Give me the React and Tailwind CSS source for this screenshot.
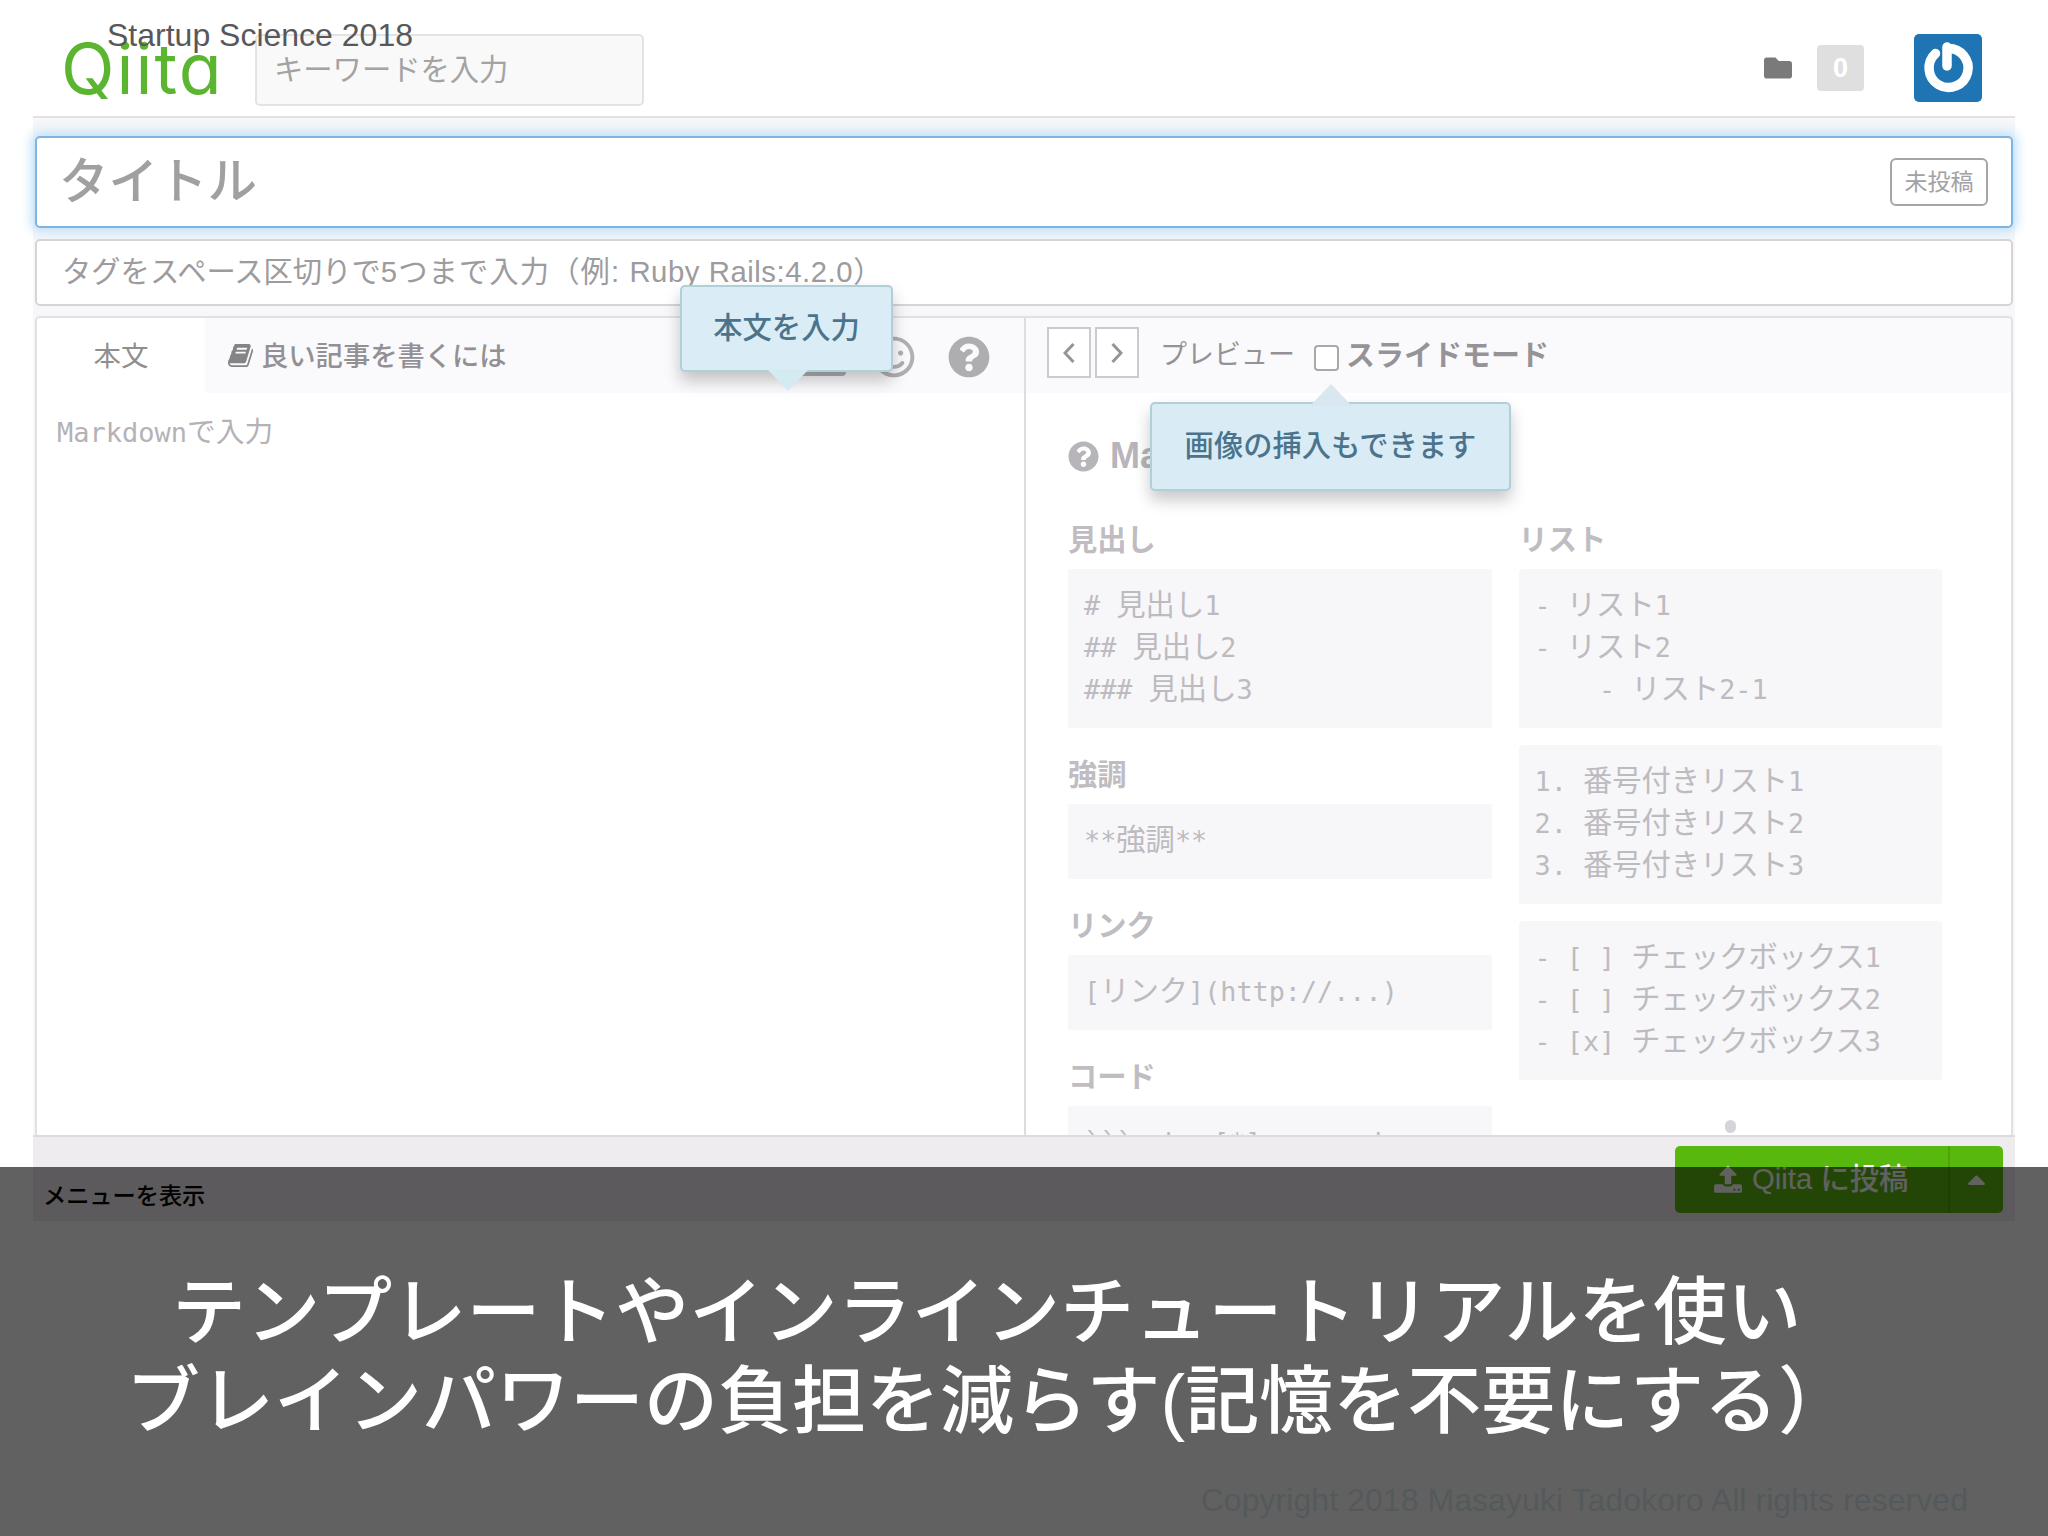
import React from 'react';
import { FaFolder, FaQuestionCircle, FaCaretUp, FaRegSmile } from 'react-icons/fa';

const cheatLeft = [
  { title: '見出し', lines: ['# 見出し1', '## 見出し2', '### 見出し3'] },
  { title: '強調', lines: ['**強調**'] },
  { title: 'リンク', lines: ['[リンク](http://...)'] },
  { title: 'コード', lines: ['```ruby [*]:name.rb'] },
];

const cheatRight = [
  ['- リスト1', '- リスト2', '    - リスト2-1'],
  ['1. 番号付きリスト1', '2. 番号付きリスト2', '3. 番号付きリスト3'],
  ['- [ ] チェックボックス1', '- [ ] チェックボックス2', '- [x] チェックボックス3'],
];

const BookIcon = ({ className }) => (
  <svg viewBox="0 0 1792 1792" fill="currentColor" className={className}>
    <path d="M1639 478q40 57 18 129l-275 906q-19 64-76.500 107.500t-122.500 43.500h-923q-77 0-148.500-53.500t-99.500-131.500q-24-67-2-127 0-4 3-27t4-37q1-8-3-21.500t-3-19.500q2-11 8-21t16.500-23.500 16.500-23.500q23-38 45-91.500t30-91.500q3-10 .5-30t-.5-28q3-11 17-28t17-23q21-36 42-92t25-90q1-9-2.500-32t.5-28q4-13 22-30.500t22-22.500q19-26 42.500-84.500t27.500-96.500q1-8-3-25.500t-2-26.500q2-8 9-18t18-23 17-21q8-12 16.500-30.500t15-35 16-36 19.500-32 26.500-23.500 36-11.500 47.500 5.500l-1 3q38-9 51-9h761q74 0 114 56t18 130l-274 906q-36 119-71.500 153.500t-128.500 34.500h-869q-27 0-38 15-11 16-1 43 24 70 144 70h923q29 0 56-15.500t35-41.500l300-987q7-22 5-57 38 15 59 43zm-1064 2q-4 13 2 22.500t20 9.500h608q13 0 25.500-9.500t16.500-22.500l21-64q4-13-2-22.500t-20-9.500h-608q-13 0-25.500 9.500t-16.500 22.500zm-83 256q-4 13 2 22.500t20 9.500h608q13 0 25.500-9.500t16.500-22.500l21-64q4-13-2-22.500t-20-9.500h-608q-13 0-25.500 9.500t-16.500 22.500z" />
  </svg>
);

const UploadIcon = ({ className }) => (
  <svg viewBox="0 0 1792 1792" fill="currentColor" className={className}>
    <path d="M1344 1472q0-26-19-45t-45-19-45 19-19 45 19 45 45 19 45-19 19-45zm256 0q0-26-19-45t-45-19-45 19-19 45 19 45 45 19 45-19 19-45zm128-224v320q0 40-28 68t-68 28h-1472q-40 0-68-28t-28-68v-320q0-40 28-68t68-28h427q21 56 70.500 92t110.500 36h256q61 0 110.500-36t70.500-92h427q40 0 68 28t28 68zm-325-648q-17 40-59 40h-256v448q0 26-19 45t-45 19h-256q-26 0-45-19t-19-45v-448h-256q-42 0-59-40-17-39 14-69l448-448q18-19 45-19t45 19l448 448q31 30 14 69z" />
  </svg>
);

const Avatar = () => (
  <svg viewBox="0 0 68 68" className="ml-[50px] h-[68px] w-[68px] rounded-[5px] bg-[#1f74b4]">
    <path d="M21.500 19.500A19.500 19.500 0 1 0 33.500 14.500" fill="none" stroke="#fff" strokeWidth="9.500" strokeLinecap="round" />
    <path d="M33 13v19" stroke="#fff" strokeWidth="9.500" strokeLinecap="round" />
  </svg>
);

// Latin runs are set in the monospace face, slightly smaller than the kana
const CodeLine = ({ text }) => (
  <div className="h-[42px] whitespace-pre leading-[42px]">
    {text.split(/([\x20-\x7e]+)/).filter(Boolean).map((part, i) =>
      /^[\x20-\x7e]/.test(part) ? (
        <span key={i} className="text-[26.800px]">{part}</span>
      ) : (
        <span key={i}>{part}</span>
      )
    )}
  </div>
);

const CodeBlock = ({ lines }) => (
  <div className="rounded-[3px] bg-[#f7f6f9] px-[16px] pt-[15px] pb-[18px] font-['DejaVu_Sans_Mono','Noto_Sans_CJK_JP',monospace] text-[29.300px] text-[#bdbbbf]">
    {lines.map((line) => (
      <CodeLine key={line} text={line} />
    ))}
  </div>
);

const CheatTitle = ({ children }) => (
  <h4 className="mb-[12px] h-[40px] text-[29.300px] leading-[40px] font-bold text-[#bfbdc1]">{children}</h4>
);

const Header = () => (
  <header className="flex h-[118px] items-start border-b-2 border-[#e3e1e2]">
    <div className="mt-[29px] ml-[28px] w-[194px] font-['Inter',sans-serif] text-[70px] leading-[80px] tracking-[2px] text-[#5cb531] [font-feature-settings:'cv11']">
      Qiita
    </div>
    <div className="mt-[34px] h-[72px] w-[389px] rounded-[5px] border-2 border-[#e4e3e4] bg-[#f9f9f9] pl-[17px] text-[29.300px] leading-[62px] text-[#a3a3a3]">
      キーワードを入力
    </div>
    <div className="mt-[34px] mr-[33px] ml-auto flex h-[68px] items-center">
      <FaFolder className="h-[28px] w-[28px] text-[#7a7a7a]" />
      <span className="ml-[25px] h-[46px] w-[47px] rounded-[4px] bg-[#dfdfdf] text-center font-['Liberation_Sans',sans-serif] text-[27px] leading-[46px] font-bold text-white">
        0
      </span>
      <Avatar />
    </div>
  </header>
);

const EditorPane = () => (
  <section className="w-[989px] border-r-2 border-[#dedce0]">
    <div className="flex h-[75px] items-center bg-[#faf9fb]">
      <div className="flex h-full w-[168px] items-center justify-center bg-white pb-[2px] text-[27.500px] text-[#8f8f8f]">本文</div>
      <BookIcon className="ml-[23px] h-[27px] w-[27px] text-[#858387]" />
      <span className="ml-[6px] pb-[2px] text-[27.300px] font-medium text-[#929094]">良い記事を書くには</span>
      <div className="mt-[2px] mr-[34px] ml-auto flex items-center text-[#b1afb2]">
        <div className="mr-[27px] h-[38px] w-[46px] rounded-[4px] border-4 border-current" />
        <FaRegSmile className="h-[42px] w-[42px]" />
        <FaQuestionCircle className="ml-[33px] h-[42px] w-[42px] text-[#aeadb0]" />
      </div>
    </div>
    <div className="flex items-baseline pt-[18px] pl-[20px] font-['DejaVu_Sans_Mono','Noto_Sans_CJK_JP',monospace] leading-[42px] text-[#b4b2b5]">
      <span className="text-[27px]">Markdown</span>
      <span className="text-[28.700px]">で入力</span>
    </div>
  </section>
);

const PreviewPane = () => (
  <section className="flex-1 overflow-hidden">
    <div className="flex h-[75px] items-start bg-[#fafafc] pt-[9px] pl-[21px]">
      <div className="flex h-[51px] w-[44px] items-center justify-center border-2 border-[#cccace] bg-white text-[#969498]">
        <svg viewBox="0 0 12 20" className="h-[20px] w-[12px]" fill="none" stroke="currentColor" strokeWidth="3"><path d="M10.500 1L2 10l8.500 9" /></svg>
      </div>
      <div className="ml-[4px] flex h-[51px] w-[44px] items-center justify-center border-2 border-[#cccace] bg-white text-[#969498]">
        <svg viewBox="0 0 12 20" className="h-[20px] w-[12px]" fill="none" stroke="currentColor" strokeWidth="3"><path d="M1.500 1L10 10l-8.500 9" /></svg>
      </div>
      <span className="ml-[21px] w-[154px] text-[27px] leading-[51px] text-[#949296]">プレビュー</span>
      <span className="mt-[18px] h-[26px] w-[25px] rounded-[4px] border-2 border-[#aaa8ac] bg-white" />
      <span className="ml-[7px] text-[29px] leading-[53px] font-bold text-[#959397]">スライドモード</span>
    </div>
    <div className="pt-[35px] pr-[69px] pl-[42px]">
      <h3 className="flex h-[56px] items-center whitespace-nowrap text-[36px] font-bold text-[#b7b5b9]">
        <FaQuestionCircle className="mr-[11px] h-[31px] w-[31px]" />
        <span className="font-['Liberation_Sans','Noto_Sans_CJK_JP',sans-serif]">Markdown チートシート</span>
      </h3>
      <div className="mt-[33px] grid grid-cols-2 gap-x-[27px]">
        <div className="flex flex-col gap-[24px]">
          {cheatLeft.map((item) => (
            <div key={item.title}>
              <CheatTitle>{item.title}</CheatTitle>
              <CodeBlock lines={item.lines} />
            </div>
          ))}
        </div>
        <div>
          <CheatTitle>リスト</CheatTitle>
          <div className="flex flex-col gap-[17px]">
            {cheatRight.map((lines) => (
              <CodeBlock key={lines[0]} lines={lines} />
            ))}
          </div>
          <div className="mx-auto mt-[40px] h-[13px] w-[11px] rounded-full bg-[#d6d4d8]" />
        </div>
      </div>
    </div>
  </section>
);

const Footer = () => (
  <footer className="flex h-[86px] items-start border-t-2 border-[#dddbdd] bg-[#eeecee]">
    <span className="mt-[39px] ml-[10px] text-[23.200px] leading-[36px] font-medium text-black">メニューを表示</span>
    <div className="mt-[9px] mr-[12px] ml-auto flex h-[67px] w-[328px] rounded-[5px] bg-[#59b80d] text-white">
      <div className="flex w-[275px] items-center border-r-2 border-[#4fa30b] pl-[38px]">
        <UploadIcon className="h-[30px] w-[30px]" />
        <span className="ml-[9px] pb-[1px] whitespace-nowrap font-['Liberation_Sans','Noto_Sans_CJK_JP',sans-serif] text-[29.300px] font-medium">Qiita に投稿</span>
      </div>
      <div className="flex flex-1 items-center justify-center">
        <FaCaretUp className="h-[29px] w-[29px]" />
      </div>
    </div>
  </footer>
);

const App = () => {
  return (
    <div className="relative h-[1536px] w-[2048px] overflow-hidden bg-white font-['Noto_Sans_CJK_JP',sans-serif]">
      <main className="ml-[33px] w-[1982px]">
        <Header />
        <div className="bg-[#f7f6f9] px-[2px] pt-[18px]">
          <div className="flex h-[92px] items-center rounded-[5px] border-2 border-[#7fb4e0] bg-white pr-[23px] pl-[22px] shadow-[0_0_12px_4px_#bfe1fa]">
            <span className="pb-[8px] text-[49.500px] font-medium text-[#a0a0a0]">タイトル</span>
            <span className="ml-auto h-[48px] w-[98px] rounded-[6px] border-2 border-[#a6a4a8] text-center text-[23px] leading-[40px] text-[#a3a1a5]">未投稿</span>
          </div>
          <div className="mt-[11px] h-[67px] rounded-[5px] border-2 border-[#d9d3d5] bg-white pl-[25px] font-['Liberation_Sans','Noto_Sans_CJK_JP',sans-serif] text-[29.300px] leading-[62px] text-[#9d9b9e]">
            タグをスペース区切りで<span className="tracking-[1.100px]">5つまで入力（例: </span>
            <span className="tracking-[0.550px]">Ruby Rails:4.2.0）</span>
          </div>
        </div>
        <div className="bg-[#f7f6f9] px-[2px] pt-[10px]">
          <div className="flex h-[819px] overflow-hidden rounded-t-[5px] border-x-2 border-t-2 border-[#e2e0e4] bg-white">
            <EditorPane />
            <PreviewPane />
          </div>
        </div>
        <Footer />
      </main>

      <div className="absolute top-[285px] left-[680px] h-[87px] w-[213px] rounded-[5px] border-2 border-[#b1cfd9] bg-[#daecf6] text-center text-[29.300px] leading-[77px] font-medium text-[#4b748c] shadow-[0_9px_16px_rgba(0,0,0,0.22)]">
        本文を入力
        <svg viewBox="0 0 42 22" className="absolute top-[82px] left-[85px] h-[22px] w-[42px]"><path d="M0 0h42L21 22z" fill="#d4ebf2" /></svg>
      </div>

      <div className="absolute top-[402px] left-[1150px] h-[89px] w-[361px] rounded-[5px] border-2 border-[#b1cfd9] bg-[#d9ecf6] text-center text-[29.300px] leading-[79px] font-medium text-[#4b748c] shadow-[0_9px_16px_rgba(0,0,0,0.22)]">
        画像の挿入もできます
        <svg viewBox="0 0 42 22" className="absolute top-[-20px] left-[158px] h-[22px] w-[42px]"><path d="M0 22h42L21 0z" fill="#d9e7f1" /></svg>
      </div>

      <div className="absolute top-[16px] left-[107px] font-['Liberation_Sans',sans-serif] text-[32px] leading-[38px] whitespace-nowrap text-[#58585a]">
        Startup Science 2018
      </div>

      <div className="absolute inset-x-0 bottom-0 h-[369px] bg-[#020002]/62 text-white">
        <div className="pt-[94px] text-[74px] leading-[90px] font-medium whitespace-nowrap">
          <p className="pl-[172px] tracking-[0.200px]">テンプレートやインラインチュートリアルを使い</p>
          <p className="mt-[6px] pl-[126px] font-['Liberation_Sans','Noto_Sans_CJK_JP',sans-serif]">ブレインパワーの負担を減らす(記憶を不要にする）</p>
        </div>
        <p className="mt-[34px] mr-[80px] text-right font-['Liberation_Sans',sans-serif] text-[32px] leading-[38px] tracking-[0.060px] text-[#545a5b]">
          Copyright 2018 Masayuki Tadokoro All rights reserved
        </p>
      </div>
    </div>
  );
};

export default App;
